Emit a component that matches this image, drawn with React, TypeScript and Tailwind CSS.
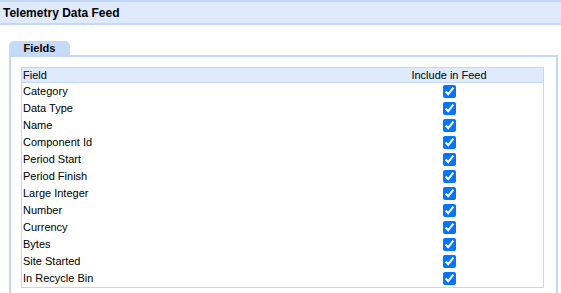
const fields = [
  'Category',
  'Data Type',
  'Name',
  'Component Id',
  'Period Start',
  'Period Finish',
  'Large Integer',
  'Number',
  'Currency',
  'Bytes',
  'Site Started',
  'In Recycle Bin',
];

export default function App() {
  return (
    <div className="w-[561px] h-[293px] overflow-hidden bg-white text-black font-['Liberation_Sans',Arial,sans-serif]">
      <div className="h-[25px] border-y-2 border-[#c3d8f8] bg-[#dfeaff] px-[3px] flex items-center">
        <h1 className="text-[12px] font-bold leading-none">Telemetry Data Feed</h1>
      </div>

      <div className="mt-[16px] ml-[9px] mr-[3px]">
        <div className="w-[61px] h-[14px] rounded-t-[5px] bg-[#c5d9f8] flex items-center justify-center">
          <span className="text-[11px] font-bold leading-none">Fields</span>
        </div>
        <div className="border-2 border-[#c3d8f8] pt-[10px] pl-[10px] h-[240px]">
          <div className="w-[523px] border border-[#c3d8f8] text-[11px]">
            <div className="grid grid-cols-[333px_1fr] h-[15px] bg-[#dfeaff] border-b border-[#c3d8f8] items-center">
              <span className="pl-[1px] leading-none">Field</span>
              <span className="text-center leading-none">Include in Feed</span>
            </div>
            {fields.map((f) => (
              <div key={f} className="grid grid-cols-[333px_1fr] h-[17px] items-center">
                <span className="pl-[1px] leading-none">{f}</span>
                <div className="flex justify-center">
                  <input type="checkbox" defaultChecked className="w-[13px] h-[13px] m-0 accent-[#0075ff]" />
                </div>
              </div>
            ))}
          </div>
        </div>
      </div>
    </div>
  );
}
